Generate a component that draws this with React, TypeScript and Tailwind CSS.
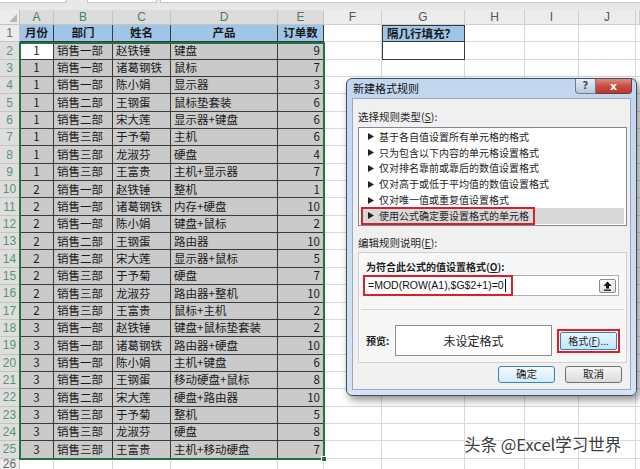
const rows: [number, string, string, string, number][] = [
  [1, "销售一部", "赵铁锤", "键盘", 9],
  [1, "销售一部", "诸葛钢铁", "鼠标", 7],
  [1, "销售一部", "陈小娟", "显示器", 3],
  [1, "销售二部", "王钢蛋", "鼠标垫套装", 6],
  [1, "销售二部", "宋大莲", "显示器+键盘", 6],
  [1, "销售三部", "于予菊", "主机", 6],
  [1, "销售三部", "龙淑芬", "硬盘", 4],
  [1, "销售三部", "王富贵", "主机+显示器", 7],
  [2, "销售一部", "赵铁锤", "整机", 1],
  [2, "销售一部", "诸葛钢铁", "内存+硬盘", 10],
  [2, "销售一部", "陈小娟", "键盘+鼠标", 2],
  [2, "销售二部", "王钢蛋", "路由器", 10],
  [2, "销售二部", "宋大莲", "显示器+鼠标", 5],
  [2, "销售三部", "于予菊", "硬盘", 7],
  [2, "销售三部", "龙淑芬", "路由器+整机", 10],
  [2, "销售三部", "王富贵", "鼠标+主机", 2],
  [3, "销售一部", "赵铁锤", "键盘+鼠标垫套装", 2],
  [3, "销售一部", "诸葛钢铁", "路由器+硬盘", 10],
  [3, "销售一部", "陈小娟", "主机+键盘", 6],
  [3, "销售二部", "王钢蛋", "移动硬盘+鼠标", 8],
  [3, "销售二部", "宋大莲", "硬盘+路由器", 10],
  [3, "销售三部", "于予菊", "整机", 5],
  [3, "销售三部", "龙淑芬", "硬盘", 8],
  [3, "销售三部", "王富贵", "主机+移动硬盘", 7],
];

const rules = [
  "基于各自值设置所有单元格的格式",
  "只为包含以下内容的单元格设置格式",
  "仅对排名靠前或靠后的数值设置格式",
  "仅对高于或低于平均值的数值设置格式",
  "仅对唯一值或重复值设置格式",
  "使用公式确定要设置格式的单元格",
];

const cjk = "font-['Noto_Sans_CJK_SC','Noto_Sans',sans-serif]";
const light = "border-r border-b border-[#d9d9d9]";
const dark = "border-r border-b border-[#3a3a3a]";

function RowHead({ n, sel }: { n: number; sel?: boolean }) {
  return (
    <div
      className={`w-[20px] shrink-0 flex items-center justify-center border-r border-b border-[#c4c4c4] text-[12px] font-['Liberation_Sans',sans-serif] ${
        sel ? "bg-[#dedede] text-[#5b9470]" : "bg-[#ececec] text-[#6b6b6b]"
      }`}
    >
      {n}
    </div>
  );
}

function EmptyRight({ g2 }: { g2?: boolean }) {
  return (
    <>
      <div className={`w-[58px] shrink-0 bg-white ${light}`} />
      <div
        className={`w-[83px] shrink-0 bg-white ${
          g2 ? "border border-t-0 border-[#3a3a3a]" : light
        }`}
      />
      <div className={`w-[60px] shrink-0 bg-white ${light}`} />
      <div className={`w-[54px] shrink-0 bg-white ${light}`} />
      <div className={`w-[57px] shrink-0 bg-white ${light}`} />
      <div className={`w-[4px] shrink-0 bg-white border-b border-[#d9d9d9]`} />
    </>
  );
}

function Tri() {
  return (
    <svg width="6" height="7" viewBox="0 0 6 7" className="shrink-0">
      <path d="M0 0 L6 3.5 L0 7 Z" fill="#222" />
    </svg>
  );
}

function Dialog() {
  return (
    <div className="absolute left-[346px] top-[78px] w-[291px] h-[318px] rounded-[6px] border border-[#3d4f63] bg-gradient-to-b from-[#c2d6ee] to-[#d5e3f3] shadow-[3px_4px_8px_rgba(0,0,0,0.45)] flex flex-col">
      <div className="h-[19px] flex items-start relative">
        <span className={`pl-[6px] pt-[4px] text-[11px] leading-none text-[#111] ${cjk}`}>新建格式规则</span>
        <div className="ml-auto mr-[4px] flex">
          <div className="w-[21px] h-[15px] rounded-bl-[4px] border border-t-0 border-[#6b7d92] bg-gradient-to-b from-[#e4ecf5] to-[#b9c9dc] flex items-center justify-center text-[10px] leading-none text-[#3a4a5c] font-['DejaVu_Sans',sans-serif] font-bold">
            ?
          </div>
          <div className="w-[36px] h-[15px] rounded-br-[4px] border border-l-0 border-t-0 border-[#6b3a38] bg-gradient-to-b from-[#e08a80] via-[#c94d40] to-[#b8382c] flex items-center justify-center text-[11px] leading-none text-white font-['DejaVu_Sans',sans-serif] font-bold">
            x
          </div>
        </div>
      </div>
      <div className={`mx-[5px] h-[292px] border border-[#97aac0] bg-[#f0f0f0] flex flex-col ${cjk} text-[#1e1e1e]`}>
        <div className="mt-[11px] ml-[5px] h-[14px] flex items-center text-[10.5px]">
          选择规则类型(<span className="underline">S</span>):
        </div>
        <div className="mt-[3px] ml-[5px] w-[269px] h-[99px] border border-[#828790] bg-white py-[1px] px-[2px] flex flex-col">
          {rules.map((t, i) =>
            i === 5 ? (
              <div key={t} className="h-[16px] flex items-center bg-[#d9d9d9]">
                <div className="h-[18px] flex items-center gap-[5px] pl-[5px] pr-[4px] border-2 border-[#d9202a] text-[10px] leading-none">
                  <Tri />
                  <span>{t}</span>
                </div>
              </div>
            ) : (
              <div key={t} className="h-[16px] flex items-center gap-[5px] pl-[7px] text-[10px] leading-none">
                <Tri />
                <span>{t}</span>
              </div>
            )
          )}
        </div>
        <div className="mt-[10px] ml-[5px] h-[14px] flex items-center text-[10.5px]">
          编辑规则说明(<span className="underline">E</span>):
        </div>
        <div className="mt-[2px] ml-[5px] w-[269px] h-[111px] border border-[#d0d0d0] bg-[#f7f7f7] flex flex-col">
          <div className="mt-[6px] ml-[7px] h-[14px] flex items-center text-[10px] font-bold">
            为符合此公式的值设置格式(<span className="underline">O</span>):
          </div>
          <div className="mt-[2px] ml-[4px] w-[256px] h-[21px] border border-[#abadb3] bg-white flex items-center">
            <div className="-ml-px h-[21px] flex items-center border-2 border-[#d9202a] pl-[3px] pr-[5px]">
              <span className="text-[10.5px] leading-none font-['Liberation_Sans',sans-serif] text-[#111]">
                =MOD(ROW(A1),$G$2+1)=0
              </span>
              <span className="w-px h-[13px] bg-black ml-px" />
            </div>
            <div className="ml-auto mr-[2px] w-[17px] h-[14px] border border-[#8a8a8a] rounded-[2px] bg-gradient-to-b from-[#fbfbfb] to-[#e2e2e2] flex items-center justify-center">
              <svg width="9" height="10" viewBox="0 0 9 10">
                <path d="M4.5 0.5 L8.5 5 L6 5 L6 7.5 L3 7.5 L3 5 L0.5 5 Z" fill="#111" />
                <rect x="1" y="8.5" width="7" height="1.3" fill="#111" />
              </svg>
            </div>
          </div>
          <div className="mt-[13px] mx-[2px] h-px bg-[#d5d5d5]" />
          <div className="mt-[15px] flex items-center h-[31px]">
            <span className="ml-[7px] w-[29px] text-[10px] font-bold">预览:</span>
            <div className="w-[157px] h-[31px] border border-[#8d8d8d] bg-white flex items-center justify-center text-[12px] text-[#222]">
              未设定格式
            </div>
            <div className="ml-[5px] w-[63px] h-[24px] border-2 border-[#d9202a] p-[1px]">
              <div className="w-full h-full border border-[#3c7fb1] rounded-[2px] bg-gradient-to-b from-[#eaf6fd] to-[#bee6fd] flex items-center justify-center text-[10px] leading-none">
                格式(<span className="underline">F</span>)...
              </div>
            </div>
          </div>
        </div>
        <div className="mt-[3px] h-[17px] flex justify-end gap-[10px] pr-[8px]">
          <div className="w-[57px] h-[17px] border border-[#3c7fb1] rounded-[3px] bg-gradient-to-b from-[#f2f9fe] to-[#d4ebf9] flex items-center justify-center text-[10.5px] leading-none">
            确定
          </div>
          <div className="w-[57px] h-[17px] border border-[#707070] rounded-[3px] bg-gradient-to-b from-[#f6f6f6] to-[#dcdcdc] flex items-center justify-center text-[10.5px] leading-none">
            取消
          </div>
        </div>
      </div>
    </div>
  );
}

export default function App() {
  const cellText = `text-[11.5px] leading-none text-[#1a1a1a] ${cjk}`;
  return (
    <div className="relative w-[640px] h-[469px] overflow-hidden bg-white select-none">
      {/* formula bar remnant */}
      <div className="h-[10px] bg-[#e8e8e8] flex items-start">
        <div className="w-[67px] h-[3px] bg-white border-b border-r border-[#c6c6c6]" />
        <div className="ml-[20px] w-[70px] h-[3px] bg-white border border-t-0 border-[#c6c6c6]" />
        <div className="ml-[3px] flex-1 h-[3px] bg-white border-b border-l border-[#c6c6c6]" />
      </div>
      {/* column headers */}
      <div className="flex h-[15px] text-[12px] font-['Liberation_Sans',sans-serif]">
        <div className="w-[20px] shrink-0 bg-[#ececec] border-r border-b border-[#c4c4c4] flex items-end justify-end pr-[2px] pb-[2px]">
          <svg width="8" height="8" viewBox="0 0 8 8">
            <path d="M8 0 L8 8 L0 8 Z" fill="#b5b5b5" />
          </svg>
        </div>
        {[
          ["A", "w-[34px]"],
          ["B", "w-[59px]"],
          ["C", "w-[58px]"],
          ["D", "w-[107px]"],
          ["E", "w-[46px]"],
        ].map(([l, w]) => (
          <div
            key={l}
            className={`${w} shrink-0 bg-[#dcdcdc] text-[#4f7f62] border-r border-b border-[#c4c4c4] flex items-center justify-center`}
          >
            {l}
          </div>
        ))}
        {[
          ["F", "w-[58px]"],
          ["G", "w-[83px]"],
          ["H", "w-[60px]"],
          ["I", "w-[54px]"],
          ["J", "w-[57px]"],
          ["", "w-[4px]"],
        ].map(([l, w]) => (
          <div
            key={w}
            className={`${w} shrink-0 bg-[#ececec] text-[#555] border-r border-b border-[#cfcfcf] flex items-center justify-center`}
          >
            {l}
          </div>
        ))}
      </div>
      {/* row 1 */}
      <div className="flex h-[17.35px]">
        <RowHead n={1} />
        {[
          ["月份", "w-[34px]"],
          ["部门", "w-[59px]"],
          ["姓名", "w-[58px]"],
          ["产品", "w-[107px]"],
          ["订单数", "w-[46px]"],
        ].map(([t, w]) => (
          <div
            key={t}
            className={`${w} shrink-0 bg-[#9fc5e8] ${dark} flex items-center justify-center font-bold ${cellText}`}
          >
            {t}
          </div>
        ))}
        <div className={`w-[58px] shrink-0 bg-white ${light}`} />
        <div
          className={`w-[83px] shrink-0 bg-[#9fc5e8] border border-[#3a3a3a] flex items-center pl-[4px] font-bold ${cellText}`}
        >
          隔几行填充？
        </div>
        <div className={`w-[60px] shrink-0 bg-white ${light}`} />
        <div className={`w-[54px] shrink-0 bg-white ${light}`} />
        <div className={`w-[57px] shrink-0 bg-white ${light}`} />
        <div className="w-[4px] shrink-0 bg-white border-b border-[#d9d9d9]" />
      </div>
      {/* data rows */}
      {rows.map((r, i) => {
        const n = i + 2;
        const bg = n === 2 ? "bg-white" : "bg-[#cacaca]";
        return (
          <div key={n} className="flex h-[17.35px]">
            <RowHead n={n} sel />
            <div className={`w-[34px] shrink-0 ${bg} ${dark} flex items-center justify-center ${cellText}`}>{r[0]}</div>
            <div className={`w-[59px] shrink-0 bg-[#cacaca] ${dark} flex items-center pl-[3px] ${cellText}`}>{r[1]}</div>
            <div className={`w-[58px] shrink-0 bg-[#cacaca] ${dark} flex items-center pl-[3px] ${cellText}`}>{r[2]}</div>
            <div className={`w-[107px] shrink-0 bg-[#cacaca] ${dark} flex items-center pl-[3px] ${cellText}`}>{r[3]}</div>
            <div className={`w-[46px] shrink-0 bg-[#cacaca] ${dark} flex items-center justify-end pr-[3px] ${cellText}`}>{r[4]}</div>
            <EmptyRight g2={n === 2} />
          </div>
        );
      })}
      {/* row 26 */}
      <div className="flex h-[11px]">
        <RowHead n={26} />
        <div className={`w-[34px] shrink-0 ${light}`} />
        <div className={`w-[59px] shrink-0 ${light}`} />
        <div className={`w-[58px] shrink-0 ${light}`} />
        <div className={`w-[107px] shrink-0 ${light}`} />
        <div className={`w-[46px] shrink-0 ${light}`} />
        <EmptyRight />
      </div>

      {/* selection outline A2:E25 */}
      <div className="absolute left-[19px] top-[41.5px] w-[306px] h-[418px] border-2 border-[#217346] pointer-events-none" />
      <div className="absolute left-[321px] top-[456px] w-[6px] h-[6px] bg-[#217346] border border-white" />

      <Dialog />

      <div
        className={`absolute left-[464px] top-[436px] text-[16.5px] leading-none text-[#3c3c3c] ${cjk} [text-shadow:0_0_2px_#fff,0_0_2px_#fff,0_0_3px_#fff]`}
      >
        头条 @Excel学习世界
      </div>
    </div>
  );
}
